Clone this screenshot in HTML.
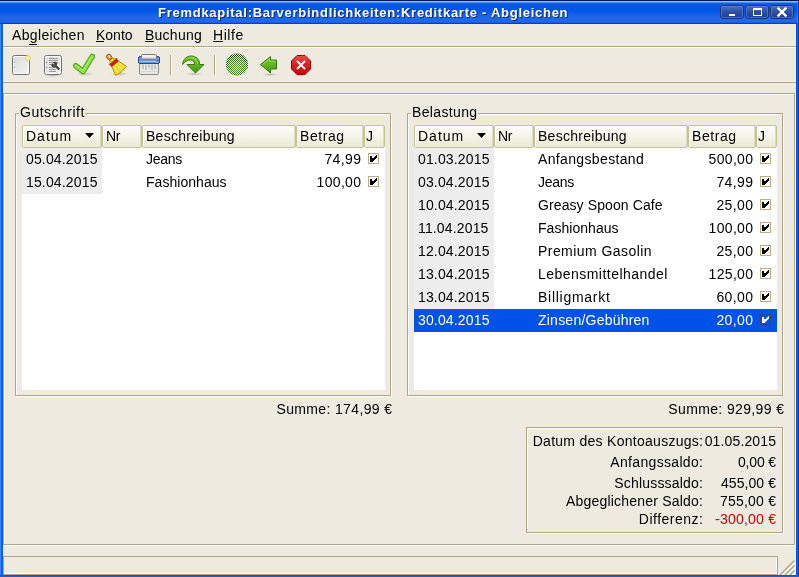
<!DOCTYPE html>
<html><head><meta charset="utf-8">
<style>
*{margin:0;padding:0;box-sizing:border-box}
html,body{width:799px;height:577px;overflow:hidden;background:#eeeae0}
body{position:relative;-webkit-font-smoothing:antialiased;font-family:"Liberation Sans",sans-serif;font-size:14px;color:#000;letter-spacing:0.4px}
#root{position:absolute;left:0;top:0;width:799px;height:577px;will-change:transform;background:#eeeae0}
.a{position:absolute}
.t{position:absolute;line-height:16px;white-space:nowrap}
.r{text-align:right}
.n{letter-spacing:0.3px}
#title{left:0;top:0;width:799px;height:24px;background:linear-gradient(to bottom,#001850 0,#001850 1px,#8ab5ff 1px,#8ab5ff 2px,#4d8df2 2px,#4d8df2 3px,#1864e6 3px,#0a5ae5 4px,#0055e5 8px,#0055e5 11px,#0b5de7 13px,#1a64e9 16px,#2068ea 18px,#2068ea 22px,#1a5ee6 22px,#1a5ee6 23px,#0640c0 23px,#0640c0 24px)}
#lb{left:0;top:24px;width:3px;height:553px;background:linear-gradient(to right,#3a86ff 0,#3a86ff 1px,#0d5ee8 1px)}
#rb{left:796px;top:24px;width:3px;height:553px;background:linear-gradient(to right,#0552e6 0,#0552e6 1px,#2a5cc0 1px,#2a5cc0 2px,#153c8a 2px)}
#bb{left:0;top:575px;width:799px;height:2px;background:linear-gradient(to bottom,#0552e6 0,#0552e6 1px,#2a5cc0 1px)}
.ttl{color:#fff;font-weight:bold;font-size:13px;letter-spacing:0.73px;line-height:15px;text-shadow:1px 1px 0 #0a2a7a}
.wb{position:absolute;top:5px;width:24px;height:14px;border-radius:3px;border:1px solid #4a78d8;background:linear-gradient(#3a64c0,#1c3f98 60%,#15358a)}
.hl{position:absolute;height:1px}
.vl{position:absolute;width:1px}
.dk{background:#b1a588}
.wh{background:#fff}
.hd{position:absolute;top:125px;height:23px;border:1px solid #c3c398;border-radius:2px;background:linear-gradient(#fdfdf9,#f4f4e8 50%,#eaead6);box-shadow:inset 1px 0 0 #fff, inset -1px 0 0 #dcdcbf}
.gray{position:absolute;background:#ededed}
.cb{position:absolute;width:11px;height:11px;border:1px solid #b7ab8b;background:#fff}
.sel{position:absolute;background:#0053e6}
.u{position:absolute;height:1px;background:#000}
</style></head><body><div id="root">
<div class="a" id="title"></div><div class="a" id="lb"></div><div class="a" id="rb"></div><div class="a" id="bb"></div>
<div class="a" style="left:797px;top:1px;width:1px;height:23px;background:rgba(120,170,255,0.35)"></div><div class="a" style="left:798px;top:1px;width:1px;height:23px;background:#123a90"></div>
<div class="t ttl" style="left:158px;top:5px">Fremdkapital:Barverbindlichkeiten:Kreditkarte - Abgleichen</div>
<div class="wb" style="left:720px"></div>
<div class="wb" style="left:745px"></div>
<div class="wb" style="left:770px"></div>
<div class="t" style="left:12px;top:27px;letter-spacing:0.356px;">Abgleichen</div>
<div class="u" style="left:29px;top:44px;width:8px"></div>
<div class="t" style="left:96px;top:27px;letter-spacing:0.0px;">Konto</div>
<div class="u" style="left:96px;top:41px;width:8px"></div>
<div class="t" style="left:145px;top:27px;letter-spacing:0.25px;">Buchung</div>
<div class="u" style="left:145px;top:41px;width:9px"></div>
<div class="t" style="left:213px;top:27px;letter-spacing:0.575px;">Hilfe</div>
<div class="u" style="left:213px;top:41px;width:10px"></div>
<div class="hl dk" style="left:3px;top:46px;width:793px"></div><div class="hl wh" style="left:3px;top:47px;width:793px"></div>
<div class="hl" style="left:3px;top:81px;width:793px;background:#f3f0e8"></div><div class="hl dk" style="left:3px;top:82px;width:793px"></div>
<div class="vl dk" style="left:170px;top:55px;height:20px"></div><div class="vl wh" style="left:171px;top:55px;height:20px"></div>
<div class="vl dk" style="left:214px;top:55px;height:20px"></div><div class="vl wh" style="left:215px;top:55px;height:20px"></div>
<div class="a" style="left:4px;top:94px;width:792px;height:452px;border:1px solid #fff"></div>
<div class="a" style="left:3px;top:93px;width:792px;height:452px;border:1px solid #b1a588"></div>
<div class="a" style="left:16px;top:114px;width:376px;height:283px;border:1px solid #fff"></div>
<div class="a" style="left:15px;top:113px;width:376px;height:283px;border:1px solid #b1a588"></div>
<div class="a" style="left:19px;top:105px;width:66px;height:12px;background:#eeeae0"></div>
<div class="t" style="left:20px;top:104px;letter-spacing:0.489px;">Gutschrift</div>
<div class="a" style="left:22px;top:147px;width:363px;height:243px;background:#fff"></div>
<div class="hd" style="left:22px;width:80px"></div>
<div class="t" style="left:26px;top:128px;letter-spacing:1.0px;">Datum</div>
<div class="hd" style="left:102px;width:40px"></div>
<div class="t" style="left:106px;top:128px;letter-spacing:-0.25px;">Nr</div>
<div class="hd" style="left:142px;width:154px"></div>
<div class="t" style="left:146px;top:128px;letter-spacing:0.273px;">Beschreibung</div>
<div class="hd" style="left:296px;width:68px"></div>
<div class="t" style="left:300px;top:128px;letter-spacing:0.55px;">Betrag</div>
<div class="hd" style="left:364px;width:21px"></div>
<div class="t" style="left:366px;top:128px;letter-spacing:0px;">J</div>
<svg class="a" style="left:85px;top:133px" width="10" height="6"><path d="M0 0H9L4.5 5Z" fill="#000"/></svg>
<div class="gray" style="left:22px;top:148px;width:80px;height:46px"></div>
<div class="t n" style="left:26px;top:151px;letter-spacing:0.15px;">05.04.2015</div>
<div class="t" style="left:146px;top:151px;letter-spacing:-0.3px;">Jeans</div>
<div class="t r n" style="left:111px;width:250.375px;top:151px;letter-spacing:0.375px;">74,99</div>
<svg class="a" style="left:368px;top:153px" width="11" height="11" shape-rendering="crispEdges"><rect x="0.5" y="0.5" width="10" height="10" fill="#fff" stroke="#bcae8a"/><path d="M2 3H4V5H6V4H7V3H8V2H9V5H8V6H7V7H6V8H5V9H2Z" fill="#000"/></svg>
<div class="t n" style="left:26px;top:174px;letter-spacing:0.15px;">15.04.2015</div>
<div class="t" style="left:146px;top:174px;letter-spacing:0.04px;">Fashionhaus</div>
<div class="t r n" style="left:111px;width:250.320px;top:174px;letter-spacing:0.32px;">100,00</div>
<svg class="a" style="left:368px;top:176px" width="11" height="11" shape-rendering="crispEdges"><rect x="0.5" y="0.5" width="10" height="10" fill="#fff" stroke="#bcae8a"/><path d="M2 3H4V5H6V4H7V3H8V2H9V5H8V6H7V7H6V8H5V9H2Z" fill="#000"/></svg>
<div class="t r" style="left:142px;width:250.357px;top:401px;letter-spacing:0.357px;">Summe: 174,99 €</div>
<div class="a" style="left:408px;top:114px;width:376px;height:283px;border:1px solid #fff"></div>
<div class="a" style="left:407px;top:113px;width:376px;height:283px;border:1px solid #b1a588"></div>
<div class="a" style="left:411px;top:105px;width:67px;height:12px;background:#eeeae0"></div>
<div class="t" style="left:412px;top:104px;letter-spacing:0.35px;">Belastung</div>
<div class="a" style="left:414px;top:147px;width:363px;height:243px;background:#fff"></div>
<div class="hd" style="left:414px;width:80px"></div>
<div class="t" style="left:418px;top:128px;letter-spacing:1.0px;">Datum</div>
<div class="hd" style="left:494px;width:40px"></div>
<div class="t" style="left:498px;top:128px;letter-spacing:-0.25px;">Nr</div>
<div class="hd" style="left:534px;width:154px"></div>
<div class="t" style="left:538px;top:128px;letter-spacing:0.273px;">Beschreibung</div>
<div class="hd" style="left:688px;width:68px"></div>
<div class="t" style="left:692px;top:128px;letter-spacing:0.55px;">Betrag</div>
<div class="hd" style="left:756px;width:21px"></div>
<div class="t" style="left:758px;top:128px;letter-spacing:0px;">J</div>
<svg class="a" style="left:477px;top:133px" width="10" height="6"><path d="M0 0H9L4.5 5Z" fill="#000"/></svg>
<div class="gray" style="left:414px;top:148px;width:80px;height:184px"></div>
<div class="t n" style="left:418px;top:151px;letter-spacing:0.15px;">01.03.2015</div>
<div class="t" style="left:538px;top:151px;letter-spacing:0.354px;">Anfangsbestand</div>
<div class="t r n" style="left:503px;width:250.320px;top:151px;letter-spacing:0.32px;">500,00</div>
<svg class="a" style="left:760px;top:153px" width="11" height="11" shape-rendering="crispEdges"><rect x="0.5" y="0.5" width="10" height="10" fill="#fff" stroke="#bcae8a"/><path d="M2 3H4V5H6V4H7V3H8V2H9V5H8V6H7V7H6V8H5V9H2Z" fill="#000"/></svg>
<div class="t n" style="left:418px;top:174px;letter-spacing:0.15px;">03.04.2015</div>
<div class="t" style="left:538px;top:174px;letter-spacing:-0.3px;">Jeans</div>
<div class="t r n" style="left:503px;width:250.375px;top:174px;letter-spacing:0.375px;">74,99</div>
<svg class="a" style="left:760px;top:176px" width="11" height="11" shape-rendering="crispEdges"><rect x="0.5" y="0.5" width="10" height="10" fill="#fff" stroke="#bcae8a"/><path d="M2 3H4V5H6V4H7V3H8V2H9V5H8V6H7V7H6V8H5V9H2Z" fill="#000"/></svg>
<div class="t n" style="left:418px;top:197px;letter-spacing:0.15px;">10.04.2015</div>
<div class="t" style="left:538px;top:197px;letter-spacing:0.1px;">Greasy Spoon Cafe</div>
<div class="t r n" style="left:503px;width:250.375px;top:197px;letter-spacing:0.375px;">25,00</div>
<svg class="a" style="left:760px;top:199px" width="11" height="11" shape-rendering="crispEdges"><rect x="0.5" y="0.5" width="10" height="10" fill="#fff" stroke="#bcae8a"/><path d="M2 3H4V5H6V4H7V3H8V2H9V5H8V6H7V7H6V8H5V9H2Z" fill="#000"/></svg>
<div class="t n" style="left:418px;top:220px;letter-spacing:0.15px;">11.04.2015</div>
<div class="t" style="left:538px;top:220px;letter-spacing:0.04px;">Fashionhaus</div>
<div class="t r n" style="left:503px;width:250.320px;top:220px;letter-spacing:0.32px;">100,00</div>
<svg class="a" style="left:760px;top:222px" width="11" height="11" shape-rendering="crispEdges"><rect x="0.5" y="0.5" width="10" height="10" fill="#fff" stroke="#bcae8a"/><path d="M2 3H4V5H6V4H7V3H8V2H9V5H8V6H7V7H6V8H5V9H2Z" fill="#000"/></svg>
<div class="t n" style="left:418px;top:243px;letter-spacing:0.15px;">12.04.2015</div>
<div class="t" style="left:538px;top:243px;letter-spacing:0.443px;">Premium Gasolin</div>
<div class="t r n" style="left:503px;width:250.375px;top:243px;letter-spacing:0.375px;">25,00</div>
<svg class="a" style="left:760px;top:245px" width="11" height="11" shape-rendering="crispEdges"><rect x="0.5" y="0.5" width="10" height="10" fill="#fff" stroke="#bcae8a"/><path d="M2 3H4V5H6V4H7V3H8V2H9V5H8V6H7V7H6V8H5V9H2Z" fill="#000"/></svg>
<div class="t n" style="left:418px;top:266px;letter-spacing:0.15px;">13.04.2015</div>
<div class="t" style="left:538px;top:266px;letter-spacing:0.465px;">Lebensmittelhandel</div>
<div class="t r n" style="left:503px;width:250.320px;top:266px;letter-spacing:0.32px;">125,00</div>
<svg class="a" style="left:760px;top:268px" width="11" height="11" shape-rendering="crispEdges"><rect x="0.5" y="0.5" width="10" height="10" fill="#fff" stroke="#bcae8a"/><path d="M2 3H4V5H6V4H7V3H8V2H9V5H8V6H7V7H6V8H5V9H2Z" fill="#000"/></svg>
<div class="t n" style="left:418px;top:289px;letter-spacing:0.15px;">13.04.2015</div>
<div class="t" style="left:538px;top:289px;letter-spacing:0.73px;">Billigmarkt</div>
<div class="t r n" style="left:503px;width:250.375px;top:289px;letter-spacing:0.375px;">60,00</div>
<svg class="a" style="left:760px;top:291px" width="11" height="11" shape-rendering="crispEdges"><rect x="0.5" y="0.5" width="10" height="10" fill="#fff" stroke="#bcae8a"/><path d="M2 3H4V5H6V4H7V3H8V2H9V5H8V6H7V7H6V8H5V9H2Z" fill="#000"/></svg>
<div class="sel" style="left:414px;top:309px;width:363px;height:23px"></div>
<div class="t n" style="left:418px;top:312px;letter-spacing:0.15px;color:#fff;">30.04.2015</div>
<div class="t" style="left:538px;top:312px;letter-spacing:0.229px;color:#fff;">Zinsen/Gebühren</div>
<div class="t r n" style="left:503px;width:250.375px;top:312px;letter-spacing:0.375px;color:#fff;">20,00</div>
<svg class="a" style="left:760px;top:314px" width="11" height="11" shape-rendering="crispEdges"><rect x="0.5" y="0.5" width="10" height="10" fill="#0053e6" stroke="#24449a"/><path d="M2 3H4V5H6V4H7V3H8V2H9V5H8V6H7V7H6V8H5V9H2Z" fill="#fff"/></svg>
<div class="t r" style="left:534px;width:250.371px;top:401px;letter-spacing:0.371px;">Summe: 929,99 €</div>
<div class="a" style="left:527px;top:428px;width:257px;height:106px;border:1px solid #fff"></div>
<div class="a" style="left:526px;top:427px;width:257px;height:106px;border:1px solid #b1a588"></div>
<div class="t r" style="left:453px;width:250.277px;top:433px;letter-spacing:0.277px;">Datum des Kontoauszugs:</div>
<div class="t r n" style="left:526px;width:250.144px;top:433px;letter-spacing:0.144px;">01.05.2015</div>
<div class="t r" style="left:453px;width:250.333px;top:454px;letter-spacing:0.333px;">Anfangssaldo:</div>
<div class="t r n" style="left:526px;width:249.820px;top:454px;letter-spacing:-0.18px;">0,00 €</div>
<div class="t r" style="left:453px;width:250.200px;top:475px;letter-spacing:0.2px;">Schlusssaldo:</div>
<div class="t r n" style="left:526px;width:250.086px;top:475px;letter-spacing:0.086px;">455,00 €</div>
<div class="t r" style="left:453px;width:250.211px;top:493px;letter-spacing:0.211px;">Abgeglichener Saldo:</div>
<div class="t r n" style="left:526px;width:250.229px;top:493px;letter-spacing:0.229px;">755,00 €</div>
<div class="t r" style="left:453px;width:250.500px;top:511px;letter-spacing:0.5px;">Differenz:</div>
<div class="t r n" style="left:526px;width:250.225px;top:511px;letter-spacing:0.225px;color:#cc0000;">-300,00 €</div>
<svg class="a" style="left:0;top:0" width="799" height="100" viewBox="0 0 799 100">
<defs>
<linearGradient id="pg" x1="0" y1="0" x2="1" y2="1"><stop offset="0" stop-color="#dcdcdc"/><stop offset="1" stop-color="#f2f2f2"/></linearGradient>
<radialGradient id="glow"><stop offset="0" stop-color="#f4f4ff"/><stop offset="0.3" stop-color="#eeeef0"/><stop offset="0.5" stop-color="#eee77a"/><stop offset="0.75" stop-color="#e8dc50" stop-opacity="0.85"/><stop offset="1" stop-color="#e8dc50" stop-opacity="0"/></radialGradient>
<radialGradient id="sh"><stop offset="0" stop-color="#000" stop-opacity="0.22"/><stop offset="1" stop-color="#000" stop-opacity="0"/></radialGradient>
<linearGradient id="wbg" x1="0" y1="0" x2="0" y2="1"><stop offset="0" stop-color="#4f70bf"/><stop offset="0.5" stop-color="#2c4fa6"/><stop offset="1" stop-color="#1b3d93"/></linearGradient>
<pattern id="chk" width="2" height="2" patternUnits="userSpaceOnUse"><rect width="2" height="2" fill="#f0efe6"/><rect width="1" height="1" fill="#3d7a1c"/><rect x="1" y="1" width="1" height="1" fill="#3d7a1c"/></pattern>
<radialGradient id="cg" cx="0.5" cy="0.62" r="0.55"><stop offset="0" stop-color="#56a22c"/><stop offset="0.7" stop-color="#3c7a1c"/><stop offset="1" stop-color="#21470f"/></radialGradient>
<pattern id="chkw" width="2" height="2" patternUnits="userSpaceOnUse"><rect x="1" y="0" width="1" height="1" fill="#e6e6dc"/><rect x="0" y="1" width="1" height="1" fill="#e6e6dc"/></pattern>
<pattern id="chk2" width="2" height="2" patternUnits="userSpaceOnUse"><rect width="2" height="2" fill="#efeee6"/><rect width="1" height="1" fill="url(#cg)"/><rect x="1" y="1" width="1" height="1" fill="url(#cg)"/></pattern>
<linearGradient id="red" x1="0" y1="0" x2="0" y2="1"><stop offset="0" stop-color="#ef4b4b"/><stop offset="0.5" stop-color="#d62020"/><stop offset="1" stop-color="#b80e0e"/></linearGradient>
<linearGradient id="grn" x1="0" y1="0" x2="0" y2="1"><stop offset="0" stop-color="#7fd03a"/><stop offset="1" stop-color="#3f9a0e"/></linearGradient>
</defs>
<!-- window buttons -->
<g>
<rect x="720.5" y="5.5" width="23" height="13" rx="2.5" fill="url(#wbg)" stroke="#17367f"/>
<rect x="721.5" y="6.5" width="21" height="11" rx="1.5" fill="none" stroke="#6a86cc" stroke-opacity="0.6"/>
<rect x="729" y="14" width="6" height="2" fill="#fff"/>
<rect x="745.5" y="5.5" width="23" height="13" rx="2.5" fill="url(#wbg)" stroke="#17367f"/>
<rect x="746.5" y="6.5" width="21" height="11" rx="1.5" fill="none" stroke="#6a86cc" stroke-opacity="0.6"/>
<rect x="753.5" y="8.5" width="8" height="7" fill="none" stroke="#fff"/><rect x="753" y="8" width="9" height="2" fill="#fff"/>
<rect x="770.5" y="5.5" width="23" height="13" rx="2.5" fill="url(#wbg)" stroke="#17367f"/>
<rect x="771.5" y="6.5" width="21" height="11" rx="1.5" fill="none" stroke="#6a86cc" stroke-opacity="0.6"/>
<path d="M778.5 8.5L785.5 15.5M785.5 8.5L778.5 15.5" stroke="#fff" stroke-width="2.4" stroke-linecap="square"/>
</g>
<!-- new doc -->
<rect x="12.5" y="55.5" width="17" height="19" rx="2" fill="#fff" stroke="#727272"/>
<rect x="14" y="57" width="14" height="16" fill="url(#pg)"/>
<circle cx="14.5" cy="62.5" r="0.8" fill="#888"/><circle cx="15" cy="63.3" r="0.7" fill="#fff"/>
<circle cx="14.5" cy="67.5" r="0.8" fill="#888"/><circle cx="15" cy="68.3" r="0.7" fill="#fff"/>
<circle cx="28" cy="58" r="3.4" fill="url(#glow)"/>
<!-- properties doc -->
<ellipse cx="53" cy="75.5" rx="8" ry="1.5" fill="url(#sh)"/>
<rect x="44.5" y="55.5" width="17" height="19" rx="2" fill="#fff" stroke="#727272"/>
<rect x="46" y="57" width="14" height="16" fill="url(#pg)"/>
<g stroke="#9a9a9a" stroke-width="1">
<path d="M49 58.5H58M49 60.5H58M49 62.5H58M49 64.5H57M49 67.5H57M49 69.5H56M49 71.5H56"/>
</g>
<circle cx="46.5" cy="62.5" r="0.8" fill="#888"/><circle cx="46.5" cy="67.5" r="0.8" fill="#888"/>
<path d="M53.5 62.5l2 -0.5l1.5 1.5l-0.8 1.8l3.3 3.3l-1.2 1.2l-3.3 -3.3l-1.8 0.8l-1.5 -1.5l0.5 -2l1.5 1.3l1 -1z" fill="#4a4a4a" stroke="#3a3a3a" stroke-width="0.8"/>
<!-- check -->
<ellipse cx="85" cy="74" rx="9" ry="1.8" fill="url(#sh)"/>
<path d="M75.8 65.8L83 71.5L92.3 56.5" fill="none" stroke="#56a81a" stroke-width="5.6" stroke-linecap="round" stroke-linejoin="round"/>
<path d="M75.8 65.8L83 71.5L92.3 56.5" fill="none" stroke="#8fe04a" stroke-width="3.4" stroke-linecap="round" stroke-linejoin="round"/>
<path d="M76.5 65.8L83 70.5L91.5 57" fill="none" stroke="#b6f080" stroke-width="1" stroke-linecap="round" stroke-linejoin="round" stroke-opacity="0.8"/>
<!-- broom -->
<ellipse cx="119" cy="74" rx="9" ry="2" fill="url(#sh)"/>
<g transform="translate(109.2 57) rotate(-40.5)">
<path d="M-4.2 8.6L4.2 8.6L7 18.3Q0 20.2 -7 18.3Z" fill="#eedb2a" stroke="#b09600" stroke-width="0.9" stroke-linejoin="round"/>
<path d="M-2 10L-3.5 17.5M1 10L1.5 18.3M3 10L5 17.5" stroke="#f8ee90" stroke-width="0.8"/>
<path d="M-1.3 2.3L1.3 2.3L3 5L5.2 6.2L-5.2 6.2L-3 5Z" fill="#e8d21a" stroke="#b09600" stroke-width="0.8" stroke-linejoin="round"/>
<rect x="-4.3" y="6.1" width="8.6" height="2.8" fill="#dc1a1a" stroke="#a00000" stroke-width="0.6"/>
<ellipse cx="0" cy="0" rx="2.5" ry="2.9" fill="#dba25a" stroke="#8f5902" stroke-width="0.9"/>
<ellipse cx="0.3" cy="-0.2" rx="0.9" ry="1.5" fill="#efc98a"/>
</g>
<!-- shredder -->
<rect x="139.5" y="63.5" width="19" height="11" rx="1.5" fill="#e8e8e4" stroke="#8c8c8a"/>
<path d="M143 64.5v4.5M146 64.5v5.5M149 64.5v3.5M152 64.5v5.5M155 64.5v4.5" stroke="#b8b8b2" stroke-width="1.4"/>
<path d="M141 71.5H157" stroke="#d4d4cc"/>
<rect x="138.5" y="56.5" width="21" height="7" rx="1.5" fill="#6c9ae0" stroke="#1f4796"/>
<path d="M139.5 61.5H158.5" stroke="#9cc0f0"/>
<rect x="141.5" y="54.5" width="15" height="4.6" rx="1.2" fill="#e4e4e4" stroke="#7a7a7a"/>
<path d="M142.5 56H155.5" stroke="#fff" stroke-opacity="0.8"/>
<rect x="157" y="60" width="1.2" height="1.2" fill="#d00"/>
<!-- separators drawn in html -->
<!-- redo -->
<ellipse cx="194" cy="74" rx="9" ry="1.8" fill="url(#sh)"/>
<path d="M182.6 64.5C183 59 187 56 191 56C196 56 200 59.5 199.5 64.5L204 64.5L195.5 73L187 64.5L194.5 64.5C194.5 61.5 192.5 60 190.5 60C187.5 60 185 61.5 182.6 64.5Z" fill="url(#grn)" stroke="#3a7a08" stroke-width="1" stroke-linejoin="round"/>
<path d="M190 57.5C194 57 197.5 59.5 197.8 64" fill="none" stroke="#a8e070" stroke-width="0.8" stroke-opacity="0.7"/>
<!-- dithered circle -->
<circle cx="237" cy="64.5" r="11" fill="url(#cg)"/><circle cx="237" cy="64.5" r="11.2" fill="url(#chkw)"/>
<!-- back arrow -->
<ellipse cx="270" cy="74.5" rx="8" ry="1.6" fill="url(#sh)"/>
<path d="M260.5 64.5L270.5 56.5V60H276.5V69H270.5V73Z" fill="url(#grn)" stroke="#3a7a08" stroke-width="1" stroke-linejoin="round"/>
<path d="M262.5 64.5L269.5 59V61.3H275.2" fill="none" stroke="#b0e880" stroke-width="0.8" stroke-opacity="0.7"/>
<!-- stop -->
<ellipse cx="301" cy="74.8" rx="8" ry="1.5" fill="url(#sh)"/>
<path d="M297 55.5H305L310.5 61V69L305 74.5H297L291.5 69V61Z" fill="url(#red)" stroke="#a40000" stroke-width="1"/>
<path d="M297 61L305 69M305 61L297 69" stroke="#fff" stroke-width="1.8"/>
</svg>
<svg class="a" style="left:778px;top:559px" width="18" height="16"><g stroke="#fff" stroke-width="1.3"><path d="M3.5 16.5L17.5 2.5M8.5 16.5L17.5 7.5M13.5 16.5L17.5 12.5"/></g><g stroke="#b1a588" stroke-width="1.5"><path d="M2 16L16.5 1.5M7 16L16.5 6.5M12 16L16.5 11.5"/></g></svg>
<div class="a" style="left:3px;top:556px;width:775px;height:19px;border:1px solid #b1a588"></div>
<div class="hl wh" style="left:4px;top:573px;width:773px"></div><div class="vl wh" style="left:776px;top:557px;height:17px"></div>
</div></body></html>
